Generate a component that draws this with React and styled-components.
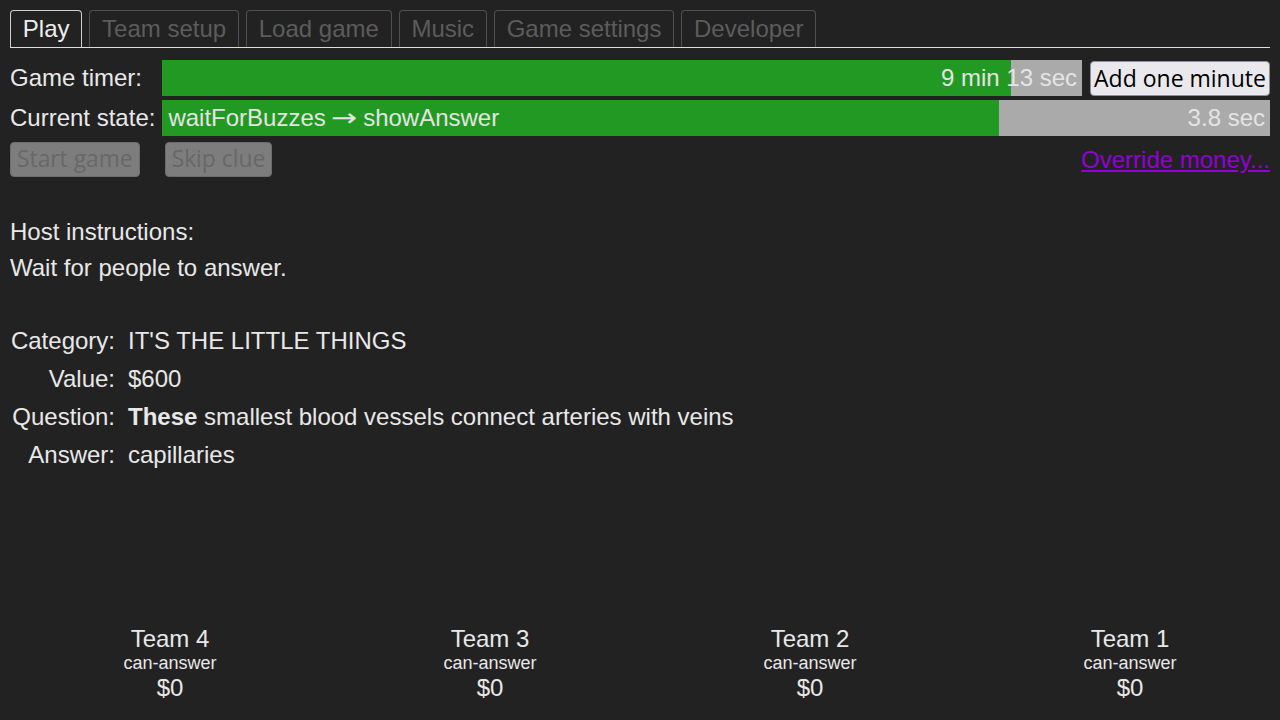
import React from "react";
import styled, { createGlobalStyle } from "styled-components";

const Global = createGlobalStyle`
  html, body { margin: 0; padding: 0; background: #222222; }
  body { font-family: "Liberation Sans", Arial, sans-serif; color: #e8e8e8; overflow: hidden; }
  * { box-sizing: border-box; }
`;

const Page = styled.div`
  min-height: 100vh;
  padding: 10px 10px 19px 10px;
  display: flex;
  flex-direction: column;
  font-size: 24px;
`;

const TabBar = styled.div`
  display: flex;
  gap: 7px;
  border-bottom: 1px solid #dddddd;
`;

const Tab = styled.div`
  height: 37px;
  padding: 0 11.8px;
  display: flex;
  align-items: center;
  border: 1px solid ${(p) => (p.$active ? "#cfcfcf" : "#505050")};
  border-bottom: none;
  border-radius: 4px 4px 0 0;
  color: ${(p) => (p.$active ? "#eeeeee" : "#5c5c5c")};
  font-size: 24px;
`;

const StatusGrid = styled.div`
  margin-top: 12px;
  display: grid;
  grid-template-columns: auto 1fr;
  column-gap: 7px;
  row-gap: 4px;
`;

const Label = styled.div`
  height: 36px;
  line-height: 36px;
  white-space: nowrap;
`;

const BarLine = styled.div`
  display: flex;
  gap: 8px;
  align-items: center;
`;

const Bar = styled.div`
  position: relative;
  flex: 1;
  height: 36px;
  background: #aaaaaa;
  display: flex;
  align-items: center;
  justify-content: space-between;
  padding: 0 5px 0 6px;
  color: #e4e4e4;
  white-space: pre;
`;

const Fill = styled.div`
  position: absolute;
  left: 0;
  top: 0;
  bottom: 0;
  background: #229922;
`;

const BarText = styled.span`
  position: relative;
  margin-left: ${(p) => (p.$right ? "auto" : "0")};
`;

const Arrow = styled.span`
  font-family: "DejaVu Sans", sans-serif;
  display: inline-block;
  width: 24px;
  text-align: center;
  transform: scaleX(1.3);
`;

const LightButton = styled.button`
  width: 180px;
  height: 35px;
  padding: 0;
  font-family: "Open Sans", "Noto Sans", sans-serif;
  font-size: 23px;
  color: #000;
  background: #e9e9ed;
  border: 1px solid #8f8f9d;
  border-radius: 4px;
`;

const ActionRow = styled.div`
  margin-top: 6px;
  display: flex;
  align-items: center;
  gap: 25px;
`;

const DisabledButton = styled.button`
  height: 35px;
  padding: 0 6px;
  font-family: "Open Sans", "Noto Sans", sans-serif;
  font-size: 22.8px;
  color: #686868;
  background: #7d7d7d;
  border: 1px solid #6c6c6c;
  border-radius: 4px;
  line-height: 1;
`;

const Link = styled.a`
  margin-left: auto;
  color: #9400d3;
  text-decoration: underline;
  font-size: 24px;
`;

const Instructions = styled.div`
  margin-top: 37px;
  line-height: 36px;
`;

const ClueGrid = styled.div`
  margin-top: 36px;
  display: grid;
  grid-template-columns: 105px auto;
  column-gap: 13px;
  justify-content: start;
`;

const ClueLabel = styled.div`
  text-align: right;
  line-height: 38px;
  white-space: nowrap;
`;

const ClueValue = styled.div`
  line-height: 38px;
  white-space: nowrap;
`;

const Teams = styled.div`
  margin-top: auto;
  display: flex;
`;

const Team = styled.div`
  flex: 0 0 320px;
  text-align: center;
`;

const TeamName = styled.div`
  font-size: 24px;
  line-height: 26px;
`;

const TeamState = styled.div`
  font-size: 18px;
  line-height: 23px;
`;

const TeamMoney = styled.div`
  font-size: 24px;
  line-height: 26px;
`;

const tabs = ["Play", "Team setup", "Load game", "Music", "Game settings", "Developer"];
const clue = [
  ["Category:", "IT'S THE LITTLE THINGS"],
  ["Value:", "$600"],
  ["Question:", <><b>These</b> smallest blood vessels connect arteries with veins</>],
  ["Answer:", "capillaries"],
];

export default function App() {
  return (
    <>
      <Global />
      <Page>
        <TabBar>
          {tabs.map((t, i) => (
            <Tab key={t} $active={i === 0}>{t}</Tab>
          ))}
        </TabBar>
        <StatusGrid>
          <Label>Game timer:</Label>
          <BarLine>
            <Bar>
              <Fill style={{ width: "92.3%" }} />
              <BarText $right>9 min 13 sec</BarText>
            </Bar>
            <LightButton>Add one minute</LightButton>
          </BarLine>
          <Label>Current state:</Label>
          <BarLine>
            <Bar>
              <Fill style={{ width: "75.5%" }} />
              <BarText>waitForBuzzes <Arrow>→</Arrow> showAnswer</BarText>
              <BarText $right>3.8 sec</BarText>
            </Bar>
          </BarLine>
        </StatusGrid>
        <ActionRow>
          <DisabledButton disabled>Start game</DisabledButton>
          <DisabledButton disabled>Skip clue</DisabledButton>
          <Link href="#">Override money...</Link>
        </ActionRow>
        <Instructions>
          <div>Host instructions:</div>
          <div>Wait for people to answer.</div>
        </Instructions>
        <ClueGrid>
          {clue.map(([l, v]) => (
            <React.Fragment key={l}>
              <ClueLabel>{l}</ClueLabel>
              <ClueValue>{v}</ClueValue>
            </React.Fragment>
          ))}
        </ClueGrid>
        <Teams>
          {[4, 3, 2, 1].map((n) => (
            <Team key={n}>
              <TeamName>Team {n}</TeamName>
              <TeamState>can-answer</TeamState>
              <TeamMoney>$0</TeamMoney>
            </Team>
          ))}
        </Teams>
      </Page>
    </>
  );
}
